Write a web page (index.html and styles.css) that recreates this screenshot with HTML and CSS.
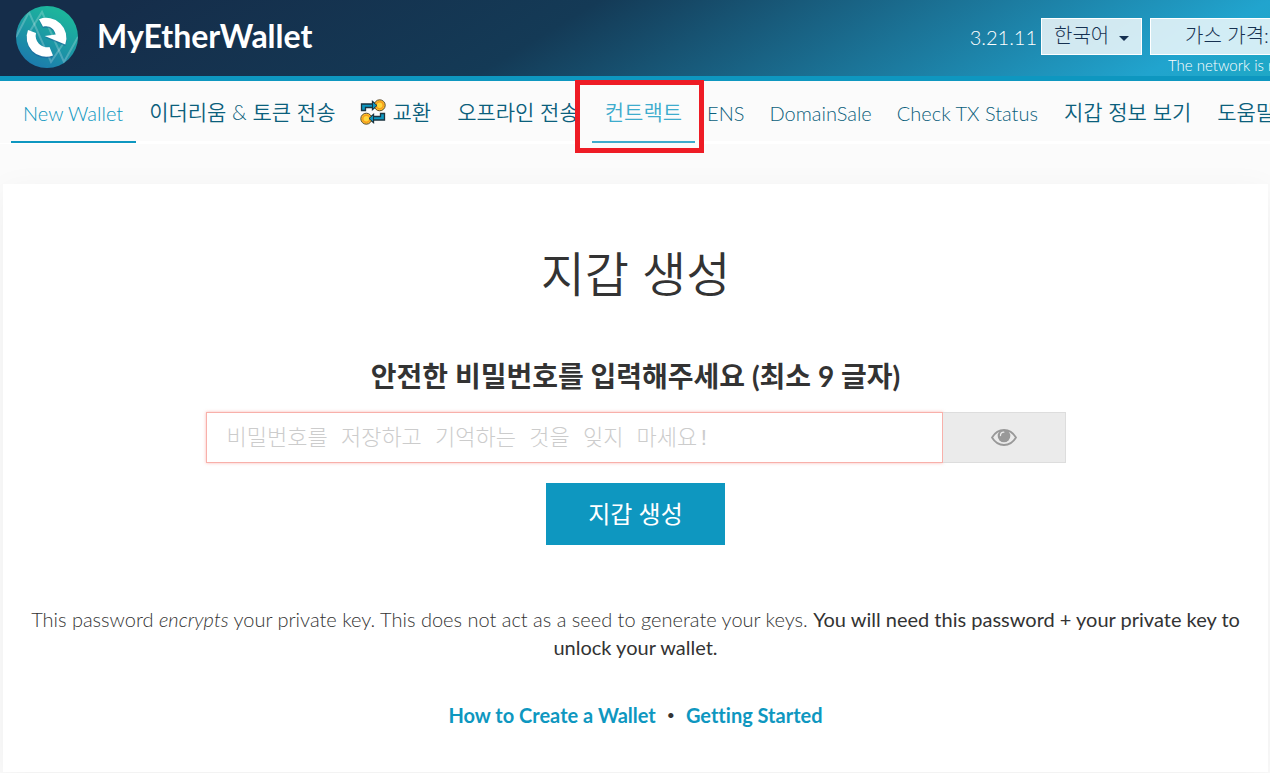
FILE: index.html
```html
<!DOCTYPE html>
<html lang="ko">
<head>
    <meta charset="UTF-8">
    <meta name="viewport" content="width=device-width, initial-scale=1.0">
    <title>MyEtherWallet</title>
    <link rel="stylesheet" href="styles.css">
</head>
<body>
    <!-- Header -->
    <header class="header">
        <a href="#home" class="brand">
            <svg class="brand-logo" viewBox="0 0 62 62" aria-hidden="true">
                <defs>
                    <linearGradient id="logo-bg" x1="0.75" y1="0" x2="0.25" y2="1">
                        <stop offset="0.1" stop-color="#1cb59c"/>
                        <stop offset="1" stop-color="#1c78ae"/>
                    </linearGradient>
                    <clipPath id="logo-clip"><circle cx="31" cy="31" r="31"/></clipPath>
                </defs>
                <circle cx="31" cy="31" r="31" fill="url(#logo-bg)"/>
                <g clip-path="url(#logo-clip)" fill="none" stroke="#fff" stroke-opacity="0.22" stroke-width="2">
                    <path d="M0 31L13 6 35 56 47 38"/>
                    <path d="M11 30L26 6 48 56 62 31"/>
                </g>
                <g fill="#1c5d9b" opacity="0.5" transform="translate(0 1.5)">
                    <path d="M12 24L20 27A11.500 11.500 0 0 0 33.500 41L37 49.500A19.500 19.500 0 0 1 12 24z"/>
                    <path d="M23 13.300A20 20 0 0 1 49.300 38.500L28.700 30l11-1.500C38 22 33 19 27 20.700z"/>
                </g>
                <g fill="#fff">
                    <path d="M12 24L20 27A11.500 11.500 0 0 0 33.500 41L37 49.500A19.500 19.500 0 0 1 12 24z"/>
                    <path d="M23 13.300A20 20 0 0 1 49.300 38.500L28.700 30l11-1.500C38 22 33 19 27 20.700z"/>
                </g>
            </svg>
            <span class="brand-name">MyEtherWallet</span>
        </a>
        <div class="header-tools">
            <span class="version">3.21.11</span>
            <div class="lang">
                <select class="lang-select" aria-label="Language">
                    <option>한국어</option>
                </select>
                <svg class="caret" viewBox="0 0 10 5" aria-hidden="true"><path d="M0 0h10L5 5z"/></svg>
            </div>
            <div class="gas">
                <button type="button" class="gas-btn">가스 가격: 41 Gwei</button>
                <p class="gas-note">The network is really full right now.</p>
            </div>
        </div>
    </header>

    <!-- Navigation -->
    <nav class="nav">
        <ul class="nav-list">
            <li class="nav-item active"><a href="#generate">New Wallet</a></li>
            <li class="nav-item ko"><a href="#send">이더리움 &amp; 토큰 전송</a></li>
            <li class="nav-item ko">
                <a href="#swap">
                    <svg class="swap-icon" viewBox="0 0 26 26" aria-hidden="true">
                        <path d="M1.500 11.500V5h11V2.500l4.500 4-4.500 4V8.500h-7v3z" fill="#0e97c0" stroke="#1c3440" stroke-width="1.300"/>
                        <path d="M24.500 14.500V21h-11v2.500l-4.500-4 4.500-4v2h7v-3z" fill="#0e97c0" stroke="#1c3440" stroke-width="1.300"/>
                        <circle cx="19.700" cy="6.300" r="5.500" fill="#ffc928" stroke="#5c4a30" stroke-width="1"/>
                        <circle cx="19.700" cy="6.300" r="3.500" fill="#ffd93b" stroke="#f79b1e" stroke-width="1.500"/>
                        <circle cx="6.300" cy="19.700" r="5.500" fill="#ffc928" stroke="#5c4a30" stroke-width="1"/>
                        <circle cx="6.300" cy="19.700" r="3.500" fill="#ffd93b" stroke="#f79b1e" stroke-width="1.500"/>
                        <path d="M12.500 2.500l4.500 4-4.500 4zM13.500 15.500l-4.500 4 4.500 4z" fill="#0e97c0" stroke="#1c3440" stroke-width="1"/>
                    </svg>
                    교환
                </a>
            </li>
            <li class="nav-item ko"><a href="#offline">오프라인 전송</a></li>
            <li class="nav-item ko marked"><a href="#contracts">컨트랙트</a></li>
            <li class="nav-item"><a href="#ens">ENS</a></li>
            <li class="nav-item"><a href="#domainsale">DomainSale</a></li>
            <li class="nav-item"><a href="#txstatus">Check TX Status</a></li>
            <li class="nav-item ko"><a href="#view">지갑 정보 보기</a></li>
            <li class="nav-item ko"><a href="#help">도움말</a></li>
        </ul>
    </nav>

    <!-- Create wallet -->
    <main class="panel">
        <h1 class="title">지갑 생성</h1>
        <form class="wallet-form">
            <label class="form-label" for="password">안전한 비밀번호를 입력해주세요 (최소 9 글자)</label>
            <div class="input-group">
                <input class="password" id="password" type="text" placeholder="비밀번호를 저장하고 기억하는 것을 잊지 마세요!">
                <button type="button" class="eye-btn" aria-label="Show password">
                    <svg class="eye" viewBox="0 0 26 17" aria-hidden="true">
                        <path d="M1 8.500C7-1.500 19-1.500 25 8.500 19 18.500 7 18.500 1 8.500z" fill="none" stroke="#999" stroke-width="1.800"/>
                        <circle cx="13" cy="7" r="6.300" fill="#999"/>
                        <path d="M9.500 6.500c0-2 1.500-3.300 3.300-3.300" fill="none" stroke="#ebebeb" stroke-width="1.300" stroke-linecap="round"/>
                    </svg>
                </button>
            </div>
            <button type="submit" class="btn-primary">지갑 생성</button>
        </form>
        <p class="notice">This password <em>encrypts</em> your private key. This does not act as a seed to generate your keys. <strong>You will need this password + your private key to unlock your wallet.</strong></p>
        <p class="links">
            <a href="#how-to">How to Create a Wallet</a>
            <span>•</span>
            <a href="#start">Getting Started</a>
        </p>
    </main>
</body>
</html>
```
FILE: styles.css
```css
:root {
    --primary: #0e97c0;
    --navy: #163151;
    --link: #0b5f7c;
    --page: #fbfbfb;
    --text: #333;
}

/* Base */
* { margin: 0; padding: 0; box-sizing: border-box; }
body {
    font-family: Lato, "Noto Sans CJK KR", sans-serif;
    font-size: 20px; font-weight: 300; line-height: 28px;
    font-variant-ligatures: none;
    color: var(--text); background: var(--page);
}
a { text-decoration: none; }
button, input, select { font: inherit; border-radius: 0; }

/* Header */
.header {
    display: flex; justify-content: space-between; align-items: flex-start;
    height: 81px; padding-left: 16px; overflow: hidden;
    border-bottom: 5px solid var(--primary);
    background: linear-gradient(149deg, #152d4a 9%, #143a56 43%, #21a4ce 91%, #1fa8c6);
}
.brand { display: flex; align-items: center; gap: 19px; padding-top: 6px; color: #fff; }
.brand-logo { width: 62px; height: 62px; }
.brand-name { padding-bottom: 2px; font-size: 32px; font-weight: 700; }
.header-tools { display: flex; padding-top: 18px; color: #fff; }
.version { margin-right: 4px; line-height: 38px; }
.lang { display: grid; align-items: center; margin-right: 8px; }
.lang, .lang-select { height: 37px; }
.lang-select {
    grid-area: 1 / 1; width: 101px; padding: 0 12px 4px; line-height: 28px;
    appearance: none; border: 1px solid #fff;
    background: rgba(255,255,255,0.8); color: var(--navy);
}
.caret {
    grid-area: 1 / 1; justify-self: end; width: 10px; height: 5px;
    margin-right: 13px; margin-top: 3px; fill: var(--navy); pointer-events: none;
}
.gas { width: 120px; white-space: nowrap; overflow: hidden; }
.gas-btn {
    display: block; width: 100%; height: 37px; padding: 0 0 4px 34px;
    text-align: left; border: 1px solid #fff; border-right: none;
    background: rgba(255,255,255,0.8); color: var(--navy);
}
.gas-note { padding-left: 18px; font-size: 15px; line-height: 21px; }

/* Navigation */
.nav { padding-left: 11px; border-bottom: 1px solid #fff; overflow-x: clip; }
.nav-list { display: flex; list-style: none; box-shadow: inset 0 -2px #fff; }
.nav-item { flex: none; }
.nav-item a {
    display: flex; align-items: center; gap: 6px; height: 62px; padding: 4px 13px 0 12px;
    border-bottom: 2px solid transparent; color: var(--link); white-space: nowrap;
}
.nav-item.active a { color: var(--primary); border-color: var(--primary); }
.nav-item.ko { font-size: 21px; font-weight: 350; }
.nav-item.ko a { padding: 2px 13px 0; }
.swap-icon { width: 26px; height: 26px; margin-left: -1px; }

/* Highlight frame around the contracts tab */
.marked { position: relative; }
.marked::before {
    content: ""; position: absolute; top: -1px; right: -9px; bottom: -10px; left: -17px;
    border: 5px solid #ee1c25; background: var(--page);
}
.nav-item.marked a { position: relative; color: #3eaccd; border-color: #3eaccd; }

/* Panel */
.panel {
    margin: 40px 2px 1px 3px; padding: 56px 20px 43px;
    text-align: center; background: #fff;
    box-shadow: 0 8px 32px rgba(0,0,0,0.05);
}
.title { font-size: 48px; font-weight: 350; line-height: 68px; }
.wallet-form { max-width: 860px; margin: 48px auto 0; }
.form-label { display: block; font-size: 28px; font-weight: 700; line-height: 40px; }
.input-group { display: flex; margin: 16px 0 20px; }
.password {
    flex: 1; min-width: 0; height: 51px; padding: 4px 20px 0;
    border: 1px solid #f8b0aa; outline: none; color: var(--text);
    box-shadow: 0 0 3px rgba(246,120,110,0.5);
    font-family: "Liberation Mono", "Noto Sans CJK KR", monospace; font-size: 22px;
}
.password::placeholder { color: #ccc; font-weight: 300; }
.eye-btn {
    display: flex; align-items: center; justify-content: center;
    width: 123px; border: 1px solid #ddd; border-left: none; background: #ebebeb;
}
.eye { width: 26px; height: 17px; }
.btn-primary {
    height: 62px; padding: 0 42px; border: none;
    background: var(--primary); color: #fff; font-size: 24px; font-weight: 400;
}
.notice { margin-top: 60px; }
.notice strong { font-weight: 400; }
.links { display: flex; justify-content: center; gap: 11px; margin-top: 40px; font-weight: 400; }
.links a { color: var(--primary); font-weight: 700; }
.links span { font-size: 14px; }
```
